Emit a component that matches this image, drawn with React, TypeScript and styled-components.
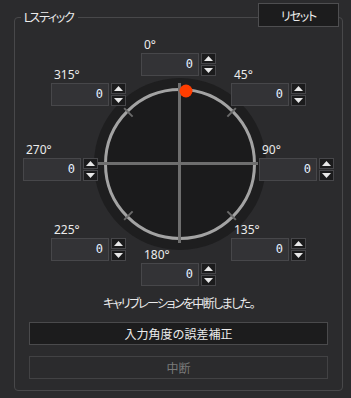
import React from "react";
import styled, { createGlobalStyle } from "styled-components";

const Global = createGlobalStyle`
  html, body { margin: 0; padding: 0; background: #2b2b2d; }
  body { font-family: "Noto Sans", "Noto Sans CJK JP", sans-serif; }
`;

const Page = styled.div`
  width: 351px;
  height: 398px;
  box-sizing: border-box;
  padding: 17px 0 0 14px;
  background: #2b2b2d;
  overflow: hidden;
`;

const GroupBox = styled.div`
  position: relative;
  width: 329px;
  height: 374px;
  box-sizing: border-box;
  border: 1px solid #48484a;
  border-radius: 4px;
  display: flex;
  flex-direction: column;
`;

const Legend = styled.div`
  position: absolute;
  top: -10px;
  left: 6px;
  padding: 0 4px 0 3px;
  background: #2b2b2d;
  color: #ececec;
  font-size: 12px;
  line-height: 18px;
  letter-spacing: -1.2px;
  font-family: "Noto Sans CJK JP", sans-serif;
  font-feature-settings: "palt";
`;

const ResetButton = styled.button`
  position: absolute;
  top: -15px;
  right: 3px;
  width: 81px;
  height: 24px;
  box-sizing: border-box;
  background: #1c1c1d;
  border: 1px solid #4e4e50;
  color: #ececec;
  font-family: "Noto Sans CJK JP", sans-serif;
  font-feature-settings: "palt";
  font-size: 12px;
  letter-spacing: -1.2px;
  padding: 0;
`;

const Dial = styled.div`
  position: relative;
  height: 270px;
  flex: none;
`;

const DialSvg = styled.svg`
  position: absolute;
  left: 75px;
  top: 56px;
`;

const Spin = styled.div`
  position: absolute;
  display: flex;
  flex-direction: column;
`;

const SpinLabel = styled.div`
  color: #ececec;
  font-size: 12px;
  line-height: 14px;
  height: 15px;
  padding-left: 3px;
  font-family: "Noto Sans", sans-serif;
`;

const SpinRow = styled.div`
  display: flex;
  gap: 2px;
`;

const SpinInput = styled.div`
  width: 58px;
  height: 23px;
  box-sizing: border-box;
  background: #333336;
  border: 1px solid #47474a;
  color: #e4f0ff;
  font-family: "DejaVu Sans Mono", monospace;
  font-size: 12px;
  line-height: 21px;
  text-align: right;
  padding-right: 5px;
`;

const SpinButtons = styled.div`
  display: flex;
  flex-direction: column;
  gap: 1px;
`;

const SpinBtn = styled.div`
  width: 15px;
  height: 11px;
  box-sizing: border-box;
  background: #1b1b1c;
  border: 1px solid #47474a;
  display: flex;
  align-items: center;
  justify-content: center;
`;

const Message = styled.div`
  margin-top: 7px;
  text-align: center;
  color: #ececec;
  font-size: 12px;
  line-height: 16px;
  letter-spacing: -1.6px;
  font-family: "Noto Sans CJK JP", sans-serif;
  font-feature-settings: "palt";
`;

const ActionButton = styled.button<{ $disabled?: boolean }>`
  margin: 11px 14px 0 14px;
  height: 23px;
  box-sizing: border-box;
  background: ${(p) => (p.$disabled ? "#2b2b2d" : "#1c1c1d")};
  border: 1px solid ${(p) => (p.$disabled ? "#424244" : "#4a4a4c")};
  color: ${(p) => (p.$disabled ? "#7a7a7a" : "#ececec")};
  font-family: "Noto Sans CJK JP", sans-serif;
  font-size: 12px;
  padding: 0;
`;

const Arrow = ({ up }: { up?: boolean }) => (
  <svg width="9" height="5" viewBox="0 0 9 5">
    {up ? <polygon points="0,5 9,5 4.5,0" fill="#e8e8e8" /> : <polygon points="0,0 9,0 4.5,5" fill="#e8e8e8" />}
  </svg>
);

const spins = [
  { label: "0°", x: 126, y: 20 },
  { label: "315°", x: 36, y: 50 },
  { label: "45°", x: 216, y: 50 },
  { label: "270°", x: 8, y: 125 },
  { label: "90°", x: 244, y: 125 },
  { label: "225°", x: 36, y: 205 },
  { label: "135°", x: 216, y: 205 },
  { label: "180°", x: 126, y: 230 },
];

const c = 90;
const ticks = [45, 135, 225, 315].map((a) => {
  const r = (a * Math.PI) / 180;
  return {
    x1: c + Math.cos(r) * 67,
    y1: c + Math.sin(r) * 67,
    x2: c + Math.cos(r) * 79,
    y2: c + Math.sin(r) * 79,
  };
});

export default function App() {
  return (
    <>
      <Global />
      <Page>
        <GroupBox>
          <Legend>Lスティック</Legend>
          <ResetButton>リセット</ResetButton>
          <Dial>
            <DialSvg width="180" height="180" viewBox="0 0 180 180">
              <circle cx={c} cy={c} r={86} fill="#1e1e1f" />
              <circle cx={c} cy={c} r={74.5} fill="#1b1b1c" stroke="#a3a3a3" strokeWidth={3} />
              {ticks.map((t, i) => (
                <line key={i} {...t} stroke="#6b6b6b" strokeWidth={2} />
              ))}
              <line x1={c - 0.5} y1={c - 81} x2={c - 0.5} y2={c + 79} stroke="#6e6e6e" strokeWidth={3} />
              <line x1={c - 82} y1={c - 0.5} x2={c + 78} y2={c - 0.5} stroke="#6e6e6e" strokeWidth={3} />
              <circle cx={c + 6} cy={c - 73} r={6.5} fill="#ff3d00" />
            </DialSvg>
            {spins.map((s) => (
              <Spin key={s.label} style={{ left: s.x, top: s.y }}>
                <SpinLabel>{s.label}</SpinLabel>
                <SpinRow>
                  <SpinInput>0</SpinInput>
                  <SpinButtons>
                    <SpinBtn>
                      <Arrow up />
                    </SpinBtn>
                    <SpinBtn>
                      <Arrow />
                    </SpinBtn>
                  </SpinButtons>
                </SpinRow>
              </Spin>
            ))}
          </Dial>
          <Message>キャリブレーションを中断しました。</Message>
          <ActionButton>入力角度の誤差補正</ActionButton>
          <ActionButton $disabled>中断</ActionButton>
        </GroupBox>
      </Page>
    </>
  );
}
